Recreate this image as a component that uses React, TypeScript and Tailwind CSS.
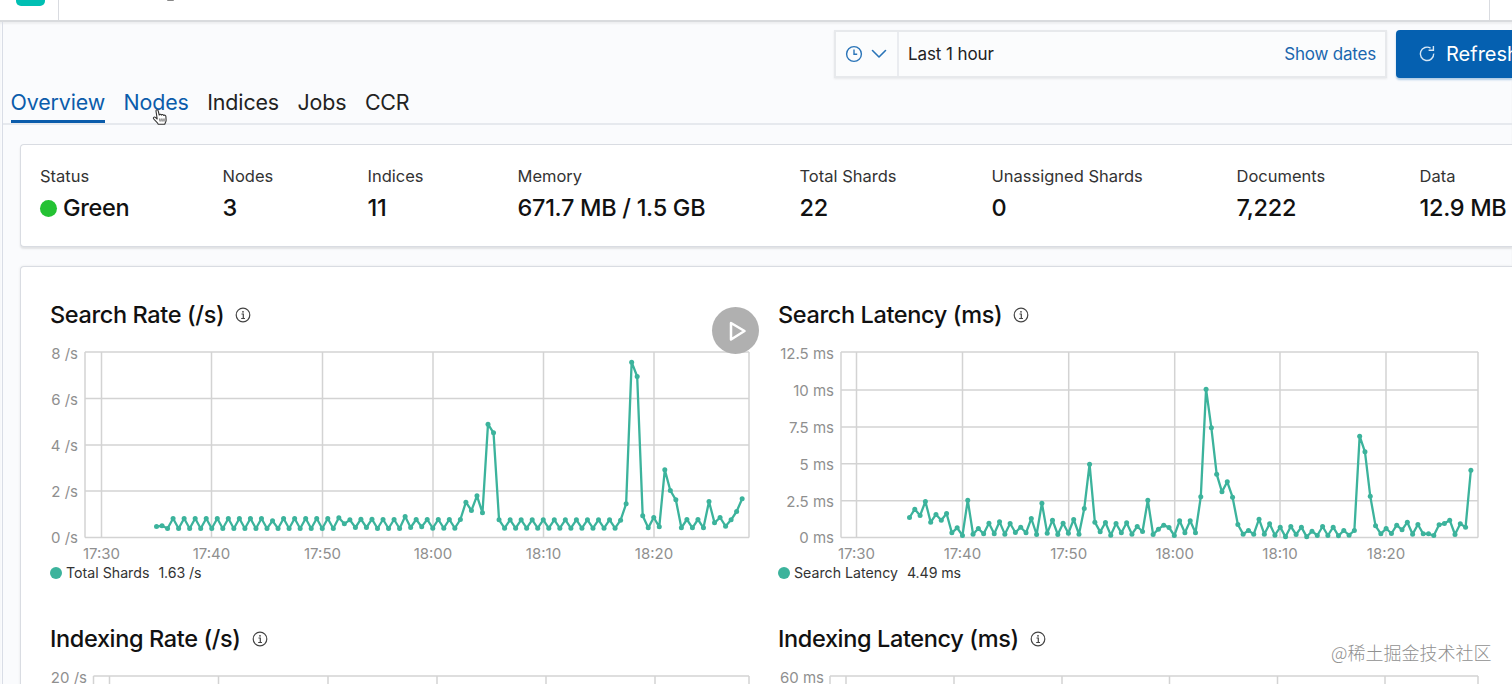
import React from "react";

const FONT = "font-[Inter,'Liberation_Sans',sans-serif]";

const rateValues: number[] = [
  741, 739, 747, 717, 747, 717, 747, 717, 747, 717, 747, 717, 747, 717, 747, 717, 747, 717, 747, 717,
  747, 724, 747, 717, 747, 717, 747, 717, 747, 717, 747, 717, 747, 715, 733, 721, 744, 719, 744, 719,
  747, 720, 747, 720, 747, 711, 744, 720, 742, 720, 746, 720, 746, 720, 746, 720, 668, 693, 649, 700,
  434, 460, 721, 746, 721, 746, 721, 746, 721, 746, 721, 746, 721, 746, 721, 746, 721, 746, 721, 746,
  721, 746, 721, 746, 722, 673, 248, 291, 709, 745, 714, 742, 571, 633, 661, 745, 720, 745, 720, 745,
  666, 730, 714, 740, 721, 696, 658,
].map((v) => (v - 216) / 3);

const latencyValues: number[] = [
  684, 659, 678, 636, 698, 675, 692, 672, 730, 715, 738, 632, 734, 717, 733, 701, 733, 697, 734, 702,
  729, 713, 730, 687, 735, 641, 731, 692, 735, 701, 731, 690, 734, 657, 524, 698, 727, 699, 737, 702,
  730, 700, 734, 711, 726, 632, 735, 719, 707, 714, 738, 694, 730, 694, 730, 622, 299, 415, 554, 607,
  577, 623, 705, 734, 723, 734, 689, 734, 703, 737, 713, 742, 711, 735, 713, 742, 725, 738, 711, 738,
  713, 739, 723, 737, 723, 440, 487, 620, 709, 733, 717, 732, 707, 721, 698, 734, 705, 733, 733, 738,
  706, 702, 692, 735, 703, 713, 542,
].map((v) => (v - 186) / 3);

type ChartProps = {
  left: number;
  right: number;
  labelRight: number;
  yLabels: string[];
  yLines: number[];
  xLines: number[];
  xLabels: string[];
  x0: number;
  step: number;
  values: number[];
};

function Chart({ left, right, labelRight, yLabels, yLines, xLines, xLabels, x0, step, values }: ChartProps) {
  const pts = values.map((v, i) => [x0 + i * step, 11.5 + v] as const);
  return (
    <svg className={`block h-[222px] w-full overflow-visible ${FONT}`}>
      <g stroke="#d3d3d3" strokeWidth="1.5" fill="none">
        {yLines.map((y) => (
          <line key={y} x1={left} x2={right} y1={y} y2={y} />
        ))}
        {[left, ...xLines, right].map((x) => (
          <line key={x} x1={x} x2={x} y1={12} y2={197.5} />
        ))}
      </g>
      <g fill="#8f8f8f" fontSize="15">
        {yLabels.map((t, i) => (
          <text key={t} x={labelRight} y={yLines[i] + (i === 0 ? 7 : i === yLabels.length - 1 ? 5.3 : 6)} textAnchor="end">{t}</text>
        ))}
        {xLabels.map((t, i) => (
          <text key={t} x={xLines[i]} y={219} textAnchor="middle">{t}</text>
        ))}
      </g>
      <polyline points={pts.map((p) => p.join(",")).join(" ")} fill="none" stroke="#3cb39c" strokeWidth="2.3" strokeLinejoin="round" />
      {pts.map(([x, y], i) => (
        <circle key={i} cx={x} cy={y} r="2.5" fill="#3cb39c" />
      ))}
    </svg>
  );
}

function InfoIcon() {
  return (
    <svg className="size-4 shrink-0" viewBox="0 0 16 16" fill="none" stroke="#444" strokeWidth="1.2">
      <circle cx="8" cy="8" r="6.8" />
      <path d="M6.5 7H8.3V11.4M6.2 11.5H10" />
      <circle cx="8" cy="4.8" r=".9" fill="#444" stroke="none" />
    </svg>
  );
}

function ChartTitle({ children }: { children: string }) {
  return (
    <div className="flex h-[30px] items-center gap-[11px]">
      <h2 className="text-[23.5px] leading-[30px] font-[450] tracking-[-0.37px] whitespace-nowrap text-[#111]">{children}</h2>
      <InfoIcon />
    </div>
  );
}

function Legend({ name, value }: { name: string; value: string }) {
  return (
    <div className="mt-px flex h-5 items-center text-[14.2px] text-[#333]">
      <span className="mr-1 size-3 rounded-full bg-[#3cb39c]" />
      <span className="mr-[9px]">{name}</span>
      <span className="tracking-[-0.1px]">{value}</span>
    </div>
  );
}

const stats = [
  { label: "Status", value: "Green", w: "w-[182.5px]", dot: true },
  { label: "Nodes", value: "3", w: "w-[145px]" },
  { label: "Indices", value: "11", w: "w-[150px]" },
  { label: "Memory", value: "671.7 MB / 1.5 GB", w: "w-[282px]" },
  { label: "Total Shards", value: "22", w: "w-[192px]" },
  { label: "Unassigned Shards", value: "0", w: "w-[245px]" },
  { label: "Documents", value: "7,222", w: "w-[183px]" },
  { label: "Data", value: "12.9 MB", w: "w-[120px]" },
];

const tabs = [
  { label: "Overview", cls: "border-[#0b5cab] text-[#0b5cab]" },
  { label: "Nodes", cls: "border-transparent text-[#0b5cab]" },
  { label: "Indices", cls: "border-transparent text-[#222]" },
  { label: "Jobs", cls: "border-transparent text-[#222]" },
  { label: "CCR", cls: "border-transparent text-[#222]" },
];

function TopBar() {
  return (
    <header className="flex h-5 shrink-0 bg-white">
      <div className="flex w-[59px] items-start border-r border-[#d9dbe0] pl-4">
        <div className="h-[6px] w-[29px] rounded-b-[5px] bg-[#00bfb3]" />
      </div>
      <div className="flex-1 pl-[108px]">
        <div className="h-px w-[7px] rounded-b-full bg-[#888]" />
      </div>
      <div className="w-[23px] border-l border-[#d9dbe0]" />
    </header>
  );
}

function TimePicker() {
  return (
    <div className="flex h-[48px] justify-end gap-[9px]">
      <div className="flex h-[48px] w-[553px] border-2 border-[#e7e9ec] bg-[#fbfcfd] shadow-[0_1px_2px_rgba(0,0,0,0.08)]">
        <div className="flex w-[63px] items-center border-r-2 border-[#eaecf0] pl-[9px]">
          <svg className="size-[18px]" viewBox="0 0 18 18" fill="none" stroke="#2a74b8" strokeWidth="1.4">
            <circle cx="9" cy="9" r="7.4" />
            <path d="M9 4.5V9.3H12.2" />
          </svg>
          <svg className="ml-[8px] h-[10px] w-[16px]" viewBox="0 0 16 10" fill="none" stroke="#2a74b8" strokeWidth="1.6" strokeLinecap="round" strokeLinejoin="round">
            <path d="M1.5 1.5L8 8L14.5 1.5" />
          </svg>
        </div>
        <div className="flex flex-1 items-center justify-between pt-px pr-[9px] pl-[9px] text-[17px]">
          <span className="tracking-[-0.1px] text-[#222]">Last 1 hour</span>
          <span className="tracking-[-0.2px] text-[#1a66ae]">Show dates</span>
        </div>
      </div>
      <button className="flex h-[48px] w-[116px] shrink-0 items-center overflow-hidden rounded-l-[4px] bg-[#0560b0] pl-[22px] text-[20px] whitespace-nowrap text-white shadow-[0_2px_2px_rgba(5,96,176,0.3)]">
        <svg className="mr-[10px] size-[18px] shrink-0" viewBox="0 0 18 18" fill="none" stroke="#d5e6f5" strokeWidth="1.4">
          <path d="M12.6 3.2A6.7 6.7 0 1 0 15.7 8.6" />
          <path d="M10.6 5.2H15.4V1" />
        </svg>
        Refresh
      </button>
    </div>
  );
}

function HandCursor() {
  return (
    <svg className="absolute top-[26px] left-[28px] h-[18px] w-[16px]" viewBox="0 0 16 18" fill="#fff" stroke="#333" strokeWidth="1.1" strokeLinejoin="round">
      <path d="M5.2 11L4 3.2C3.7 1.5 5.8 1.1 6.2 2.8L7.2 7C7.6 6 9.2 6 9.4 7.1C9.9 6.2 11.4 6.4 11.6 7.5C12.4 6.7 13.8 7.3 13.9 8.6L14.1 12.2C14.1 14 13 14.6 12.8 16.3H6.3C5.8 14.3 3 12.8 1.6 10.8C.8 9.6 2.2 8.5 3.4 9.4Z" />
      <path d="M7.8 10.5L8.1 13.5M9.9 10.5L10.1 13.5M12 10.5V13.5" strokeWidth=".9" />
    </svg>
  );
}

export default function App() {
  return (
    <div className={`relative flex h-[684px] w-[1512px] flex-col overflow-hidden bg-[#fafbfd] ${FONT}`}>
      <TopBar />
      <div className="flex min-h-0 flex-1 border-t-2 border-[#d9dbde] shadow-[inset_0_2px_2px_rgba(0,0,0,0.05)]">
        <div className="w-[3px] shrink-0 border-r border-[#d9dde6]" />
        <main className="min-w-0 flex-1">
          <div className="pt-[8px]">
            <TimePicker />
          </div>
          <nav className="mt-[4px] flex h-[43px] gap-[18.5px] border-b-2 border-[#e6e9ee] pl-[7.5px]">
            {tabs.map((t) => (
              <div key={t.label} className={`relative flex h-[41px] items-center border-b-3 pt-[3px] text-[21.4px] tracking-[-0.13px] ${t.cls}`}>
                {t.label}
                {t.label === "Nodes" && <HandCursor />}
              </div>
            ))}
          </nav>
          <section className="mt-[19px] ml-[17px] flex h-[103px] overflow-hidden rounded-l-[4px] border border-r-0 border-[#d9dce2] bg-white pt-[19px] pl-[19px] shadow-[0_2px_2px_rgba(0,0,0,0.1)]">
            {stats.map((s) => (
              <div key={s.label} className={`shrink-0 whitespace-nowrap ${s.w}`}>
                <div className="h-6 text-[16.5px] leading-6 text-[#333]">{s.label}</div>
                <div className="mt-[5px] flex h-[30px] items-center text-[23.5px] font-[450] tracking-[-0.3px] text-[#111]">
                  {s.dot && <span className="mr-[6px] size-[17px] rounded-full bg-[#24c233]" />}
                  {s.value}
                </div>
              </div>
            ))}
          </section>
          <section className="mt-[19px] ml-[17px] grid h-[460px] grid-cols-[728px_1fr] content-start rounded-tl-[4px] border-t border-l border-[#d9dce2] bg-white pt-[33px] pl-[29px] shadow-[0_0_3px_rgba(0,0,0,0.08)]">
            <div className="h-[324px]">
              <ChartTitle>Search Rate (/s)</ChartTitle>
              <div className="mt-[10px]">
                <Chart left={35} right={699} labelRight={28} yLabels={["8 /s", "6 /s", "4 /s", "2 /s", "0 /s"]} yLines={[12, 58.5, 105, 151, 197.5]} xLines={[51.5, 161.5, 272.5, 383, 493.5, 604]} xLabels={["17:30", "17:40", "17:50", "18:00", "18:10", "18:20"]} x0={106.5} step={5.525} values={rateValues} />
              </div>
              <Legend name="Total Shards" value="1.63 /s" />
            </div>
            <div className="h-[324px]">
              <ChartTitle>Search Latency (ms)</ChartTitle>
              <div className="mt-[10px]">
                <Chart left={63} right={700} labelRight={56} yLabels={["12.5 ms", "10 ms", "7.5 ms", "5 ms", "2.5 ms", "0 ms"]} yLines={[12, 50, 87, 123.7, 160.7, 197.5]} xLines={[78.5, 184.5, 290.7, 396.7, 502, 608]} xLabels={["17:30", "17:40", "17:50", "18:00", "18:10", "18:20"]} x0={131.5} step={5.296} values={latencyValues} />
              </div>
              <Legend name="Search Latency" value="4.49 ms" />
            </div>
            <div>
              <ChartTitle>Indexing Rate (/s)</ChartTitle>
              <div className="mt-[10px]">
                <Chart left={43.5} right={699} labelRight={37} yLabels={["20 /s"]} yLines={[12]} xLines={[59.5, 168.5, 278, 387, 496, 605]} xLabels={[]} x0={0} step={0} values={[]} />
              </div>
            </div>
            <div>
              <ChartTitle>Indexing Latency (ms)</ChartTitle>
              <div className="mt-[10px]">
                <Chart left={52} right={700} labelRight={46} yLabels={["60 ms"]} yLines={[12]} xLines={[68, 176, 284, 391.5, 499.5, 607]} xLabels={[]} x0={0} step={0} values={[]} />
              </div>
            </div>
          </section>
        </main>
      </div>
      <div className="absolute top-[307px] left-[712px] flex size-[47px] items-center justify-center rounded-full bg-[#b0b0b0]">
        <svg className="ml-[5px] size-[22px]" viewBox="0 0 22 22" fill="none" stroke="#fff" strokeWidth="2.5" strokeLinejoin="round">
          <path d="M4 3L17.5 11L4 19.5Z" />
        </svg>
      </div>
      <div className="absolute top-[640px] left-[1331px] font-['Noto_Sans_CJK_SC',sans-serif] text-[18px] leading-6 font-light whitespace-nowrap text-[#909090]">@稀土掘金技术社区</div>
    </div>
  );
}
